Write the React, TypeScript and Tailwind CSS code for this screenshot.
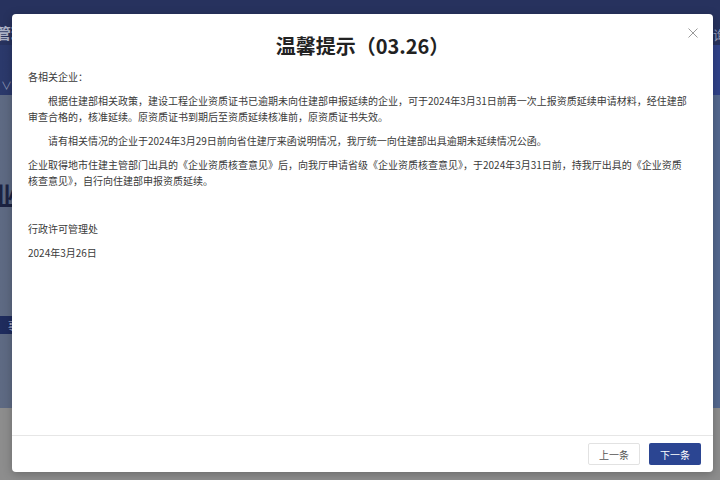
export default function App() {
  const paragraphs = [
    { text: "各相关企业：", indent: false },
    {
      text: "根据住建部相关政策，建设工程企业资质证书已逾期未向住建部申报延续的企业，可于2024年3月31日前再一次上报资质延续申请材料，经住建部审查合格的，核准延续。原资质证书到期后至资质延续核准前，原资质证书失效。",
      indent: true,
    },
    {
      text: "请有相关情况的企业于2024年3月29日前向省住建厅来函说明情况，我厅统一向住建部出具逾期未延续情况公函。",
      indent: true,
    },
    {
      text: "企业取得地市住建主管部门出具的《企业资质核查意见》后，向我厅申请省级《企业资质核查意见》，于2024年3月31日前，持我厅出具的《企业资质核查意见》，自行向住建部申报资质延续。",
      indent: false,
    },
    { text: "", indent: false },
    { text: "行政许可管理处", indent: false },
    { text: "2024年3月26日", indent: false },
  ];

  return (
    <div className="relative w-[720px] h-[480px] overflow-hidden font-['Noto_Sans_CJK_SC','Noto_Sans',sans-serif]">
      {/* dimmed page behind */}
      <div className="flex flex-col h-full">
        <div className="h-[45px] bg-[#27325e] flex items-end pb-[1px]">
          <span className="-ml-[4px] text-[15px] font-semibold text-[#aeb4c8]">管理</span>
          <span className="ml-auto -mr-[6px] text-[13px] text-[#8f98b5]">查询</span>
        </div>
        <div className="h-[50px] bg-gradient-to-r from-[#2b396b] to-[#30428a] flex items-end pb-[2px]">
          <span className="ml-[1px] text-[11px] text-[#8e97b6]">∨</span>
        </div>
        <div className="flex-1 bg-gradient-to-r from-[#5e6a83] to-[#54688f] flex flex-col">
          <div className="mt-[82px] -ml-[8px] text-[24px] font-bold text-[#1c2342]">业务</div>
          <div className="mt-[20px] ml-[14px] text-[14px] text-[#7c8599]">人</div>
          <div className="mt-[62px] -ml-[10px] w-[40px] h-[18px] bg-[#1f2c5d] text-[10px] text-[#c9cde0] flex items-center justify-end pr-[2px]">
            事由
          </div>
        </div>
        <div className="h-[72px] bg-[#8d8d8d]" />
      </div>

      {/* modal */}
      <div className="absolute inset-0 pl-[12px] pt-[14px]">
        <div className="relative w-[701px] h-[458px] bg-white rounded-[4px] shadow-[0_2px_10px_rgba(0,0,0,0.25)] flex flex-col">
          <button className="absolute top-[14px] right-[15px] w-[10px] h-[10px] text-[#9a9a9a]">
            <svg viewBox="0 0 10 10" className="w-[10px] h-[10px]" fill="none" stroke="currentColor" strokeWidth="1">
              <path d="M0.5 0.5 L9.5 9.5 M9.5 0.5 L0.5 9.5" />
            </svg>
          </button>

          <div className="pt-[18px] pb-[9px] text-center">
            <h2 className="text-[20px] leading-[28px] font-semibold text-[#222]">温馨提示（03.26）</h2>
          </div>

          <div className="flex-1 pl-[16px] pr-[22px] text-[10px] leading-[16px] text-[#3a3a3a] flex flex-col gap-[8px]">
            {paragraphs.map((p, i) => (
              <p key={i} className={p.indent ? "indent-[20px] min-h-[16px]" : "min-h-[16px]"}>
                {p.text}
              </p>
            ))}
          </div>

          <div className="h-[37px] border-t border-[#e6e6e6] flex items-start justify-end gap-[9px] pt-[7px] pr-[12px]">
            <button className="w-[52px] h-[22px] border border-[#e2e2e2] rounded-[2px] bg-white text-[10px] text-[#555]">
              上一条
            </button>
            <button className="w-[52px] h-[22px] rounded-[2px] bg-[#2b4592] text-[10px] text-white">
              下一条
            </button>
          </div>
        </div>
      </div>
    </div>
  );
}
